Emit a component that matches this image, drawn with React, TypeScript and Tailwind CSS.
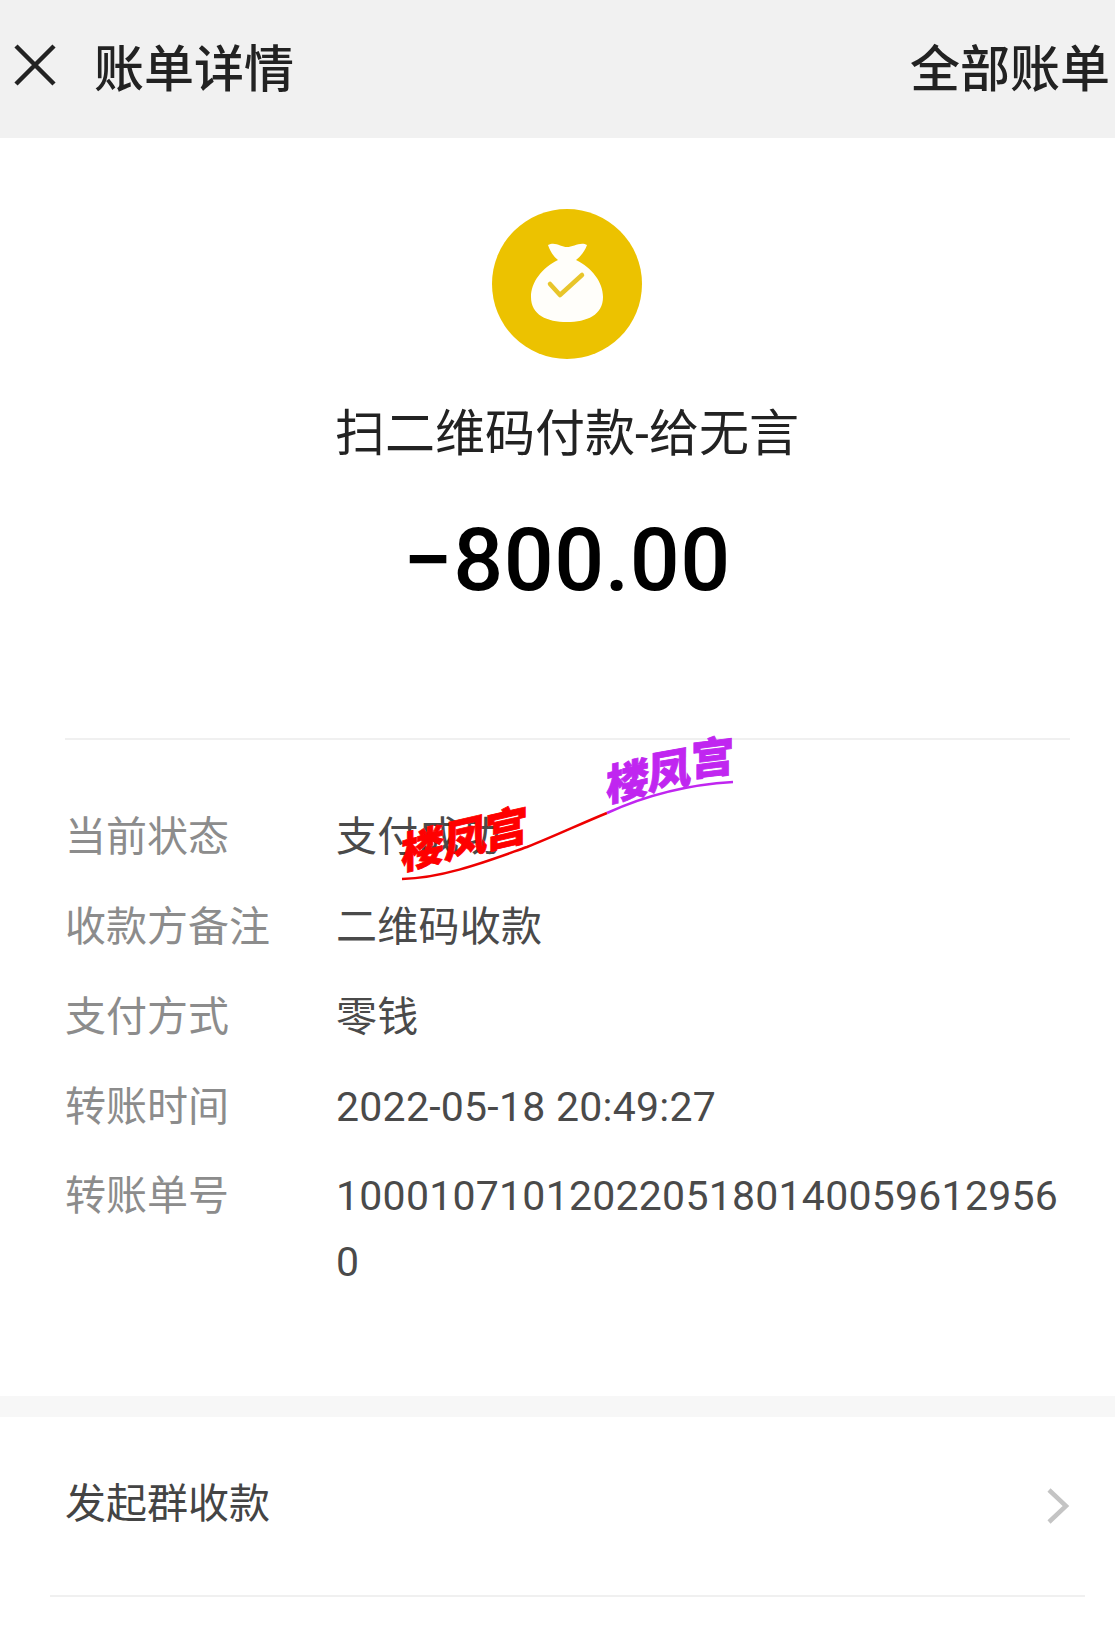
import React from 'react';

const rows = [
  { label: '当前状态', value: '支付成功' },
  { label: '收款方备注', value: '二维码收款' },
  { label: '支付方式', value: '零钱' },
  { label: '转账时间', value: '2022-05-18 20:49:27' },
];

const redChars = [
  { c: '楼', x: 401, y: 870, a: -14 },
  { c: '凤', x: 444, y: 859, a: -13 },
  { c: '宫', x: 485, y: 849, a: -13 },
];

const purpleChars = [
  { c: '楼', x: 606, y: 802, a: -13 },
  { c: '凤', x: 648, y: 790, a: -10 },
  { c: '宫', x: 691, y: 776, a: -7 },
];

const BagIcon = () => (
  <svg viewBox="0 0 150 150" className="w-[150px] h-[150px]">
    <circle cx="75" cy="75" r="75" fill="#ecc200" />
    <path
      d="M56 36 C63 32 69 38 75 38 C81 38 89 32 95 36 C93 42 89 47 84 51 C100 59 111 73 111 88 C111 106 95 113 75 113 C55 113 39 106 39 88 C39 73 50 59 66 51 C61 47 58 42 56 36 Z"
      fill="#fffefa"
    />
    <path d="M58 75 L68 86 L90 66" fill="none" stroke="#e8c52a" strokeWidth="4.5" strokeLinecap="round" strokeLinejoin="round" />
  </svg>
);

// stamped on top of the page, coordinates are page pixels
const Watermark = () => (
  <svg viewBox="395 730 360 160" className="absolute left-[395px] top-[730px] w-[360px] h-[160px] overflow-visible">
    <path d="M402 879 C445 878 490 860 527 847 C555 836 580 824 607 813" fill="none" stroke="#ee0000" strokeWidth="2.5" />
    <path d="M607 813 C640 798 680 785 733 782" fill="none" stroke="#c026f0" strokeWidth="2.5" />
    <g fontFamily="'Noto Sans CJK SC', sans-serif" fontWeight="900" fontSize="43">
      {redChars.map((ch) => (
        <text key={ch.c} transform={`translate(${ch.x} ${ch.y}) skewY(${ch.a})`} fill="#ff0000" stroke="#ff0000" strokeWidth="0.8">
          {ch.c}
        </text>
      ))}
      {purpleChars.map((ch) => (
        <text key={ch.c} transform={`translate(${ch.x} ${ch.y}) skewY(${ch.a})`} fill="#c026f0" stroke="#c026f0" strokeWidth="0.8">
          {ch.c}
        </text>
      ))}
    </g>
  </svg>
);

export default function App() {
  return (
    <div className="relative w-[1115px] h-[1629px] bg-white overflow-hidden font-['Roboto','Noto_Sans_CJK_SC',sans-serif]">
      <header className="h-[138px] bg-[#f1f1f1] flex items-center justify-between pl-[14px] pr-[5px] pb-[8px] text-[50px] text-[#222]">
        <div className="flex items-center">
          <svg viewBox="0 0 42 42" className="w-[42px] h-[42px] mr-[38px]">
            <path d="M2 2 L40 40 M40 2 L2 40" fill="none" stroke="#222" strokeWidth="4.5" />
          </svg>
          <span className="font-medium font-['Noto_Sans_CJK_SC',sans-serif]">账单详情</span>
        </div>
        <span className="font-medium font-['Noto_Sans_CJK_SC',sans-serif]">全部账单</span>
      </header>

      <section className="flex flex-col items-center pl-[19px] pt-[71px]">
        <BagIcon />
        <h1 className="mt-[45px] h-[60px] leading-[60px] text-[50px] text-[#222]">扫二维码付款-给无言</h1>
        <div className="mt-[44px] h-[104px] leading-[104px] text-[88px] font-medium text-black tracking-[0.5px]">−800.00</div>
      </section>

      <section className="ml-[65px] mr-[45px] mt-[126px] border-t-2 border-[#f0f0f0] pt-[53px] text-[41px] pb-[101px]">
        {rows.map((row) => (
          <div key={row.label} className="flex h-[90px] items-center">
            <span className="w-[271px] text-[#8c8c8c]">{row.label}</span>
            <span className="text-[#4a4a4a] tracking-[0.25px]">{row.value}</span>
          </div>
        ))}
        <div className="flex pt-[10px]">
          <span className="w-[271px] shrink-0 text-[#8c8c8c] leading-[66px]">转账单号</span>
          <span className="w-[733px] break-all text-[#4a4a4a] leading-[66px] tracking-[0.25px]">1000107101202205180140059612956 0</span>
        </div>
      </section>

      <div className="h-[21px] bg-[#f7f7f7]" />

      <div className="ml-[50px] mr-[30px] h-[180px] border-b-2 border-[#f0f0f0] flex items-center justify-between pl-[15px] pr-[15px] pb-[2px] text-[41px] text-[#444]">
        <span>发起群收款</span>
        <svg viewBox="0 0 24 36" className="w-[24px] h-[36px] translate-y-[1px]">
          <path d="M3 2 L20 18 L3 34" fill="none" stroke="#c4c4c4" strokeWidth="4.5" />
        </svg>
      </div>

      <Watermark />
    </div>
  );
}
